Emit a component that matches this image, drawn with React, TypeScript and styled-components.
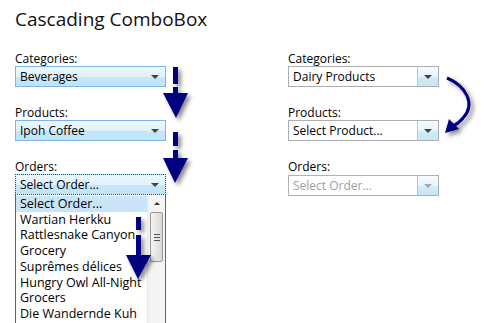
import React from 'react';
import styled, { createGlobalStyle, css } from 'styled-components';

const Global = createGlobalStyle`
  html, body { margin: 0; padding: 0; background: #fff; }
  body { font-family: "Segoe UI", "Open Sans", "Noto Sans", sans-serif; color: #000; }
`;

const Page = styled.div`
  position: relative;
  width: 486px;
  height: 323px;
  overflow: hidden;
  padding: 0 0 0 15px;
  box-sizing: border-box;
`;

const Title = styled.h1`
  margin: 0;
  padding-top: 6px;
  font-size: 19px;
  font-weight: 400;
  line-height: 26px;
  color: #111;
`;

const Columns = styled.div`
  display: flex;
  gap: 122px;
  margin-top: 19px;
`;

const Column = styled.div`
  display: flex;
  flex-direction: column;
  gap: 18px;
  width: 151px;
`;

const Field = styled.div`
  display: flex;
  flex-direction: column;
`;

const Label = styled.label`
  font-size: 12px;
  line-height: 15px;
  height: 15px;
`;

const Combo = styled.div<{ variant: 'hot' | 'plain'; disabled?: boolean; focused?: boolean }>`
  position: relative;
  height: 21px;
  box-sizing: border-box;
  display: flex;
  align-items: center;
  font-size: 12px;
  ${({ variant }) =>
    variant === 'hot'
      ? css`
          border: 1px solid #7eb4ea;
          background: linear-gradient(#ecf7fd 0%, #e0f2fc 50%, #c6e7f8 51%, #bfe4f7 100%);
        `
      : css`
          border: 1px solid #abadb3;
          background: #fff;
        `}
  ${({ disabled }) => disabled && css`border-color: #adb2b5; color: #a0a0a0; margin-top: 1px;`}
  ${({ focused }) => focused && css`border: 1px dotted #8a2a10;`}
`;

const ComboText = styled.span`
  flex: 1;
  padding-left: 4px;
  white-space: nowrap;
`;

const Caret = styled.span`
  width: 0;
  height: 0;
  margin-right: 6px;
  border-left: 4px solid transparent;
  border-right: 4px solid transparent;
  border-top: 4px solid #444;
`;

const DropButton = styled.span<{ disabled?: boolean }>`
  align-self: stretch;
  width: 20px;
  display: flex;
  align-items: center;
  justify-content: center;
  border-left: 1px solid #b8c6d2;
  background: linear-gradient(#f6fbfe 0%, #e6f3fb 50%, #d3ebf8 51%, #c6e5f6 100%);
  & > span {
    margin: 0;
    border-top-color: ${({ disabled }) => (disabled ? '#a5a5a5' : '#444')};
  }
`;

const List = styled.div`
  position: relative;
  height: 140px;
  border: 1px solid #646464;
  border-top: none;
  background: #fff;
  display: flex;
`;

const Items = styled.div`
  flex: 1;
  padding-top: 1px;
`;

const Item = styled.div<{ selected?: boolean }>`
  font-size: 12.5px;
  line-height: 15.7px;
  padding-left: 4px;
  white-space: pre-line;
  background: ${({ selected }) => (selected ? '#c9e4f6' : 'transparent')};
`;

const ScrollBar = styled.div`
  width: 17px;
  background: #f4f4f4;
  border-left: 1px solid #e6e6e6;
  display: flex;
  flex-direction: column;
  align-items: center;
`;

const ScrollUp = styled.div`
  height: 17px;
  display: flex;
  align-items: center;
  justify-content: center;
  &::before {
    content: '';
    border-left: 3px solid transparent;
    border-right: 3px solid transparent;
    border-bottom: 3px solid #333;
  }
`;

const Thumb = styled.div`
  width: 13px;
  height: 50px;
  box-sizing: border-box;
  border: 1px solid #979797;
  border-radius: 2px;
  background: linear-gradient(90deg, #f3f3f3, #e6e6e6 50%, #d8d8d8);
  display: flex;
  flex-direction: column;
  align-items: center;
  justify-content: center;
  gap: 2px;
  & > i {
    display: block;
    width: 6px;
    height: 1px;
    background: #555;
  }
`;

const Overlay = styled.svg`
  position: absolute;
  left: 0;
  top: 0;
  pointer-events: none;
`;

const orders = [
  'Select Order...',
  'Wartian Herkku',
  'Rattlesnake Canyon\nGrocery',
  'Suprêmes délices',
  'Hungry Owl All-Night\nGrocers',
  'Die Wandernde Kuh',
];

export default function App() {
  return (
    <Page>
      <Global />
      <Title>Cascading ComboBox</Title>
      <Columns>
        <Column>
          <Field>
            <Label>Categories:</Label>
            <Combo variant="hot">
              <ComboText>Beverages</ComboText>
              <Caret />
            </Combo>
          </Field>
          <Field>
            <Label>Products:</Label>
            <Combo variant="hot">
              <ComboText>Ipoh Coffee</ComboText>
              <Caret />
            </Combo>
          </Field>
          <Field>
            <Label>Orders:</Label>
            <Combo variant="hot" focused>
              <ComboText>Select Order...</ComboText>
              <Caret />
            </Combo>
            <List>
              <Items>
                {orders.map((o, i) => (
                  <Item key={o} selected={i === 0}>{o}</Item>
                ))}
              </Items>
              <ScrollBar>
                <ScrollUp />
                <Thumb><i /><i /><i /></Thumb>
              </ScrollBar>
            </List>
          </Field>
        </Column>
        <Column>
          <Field>
            <Label>Categories:</Label>
            <Combo variant="plain">
              <ComboText>Dairy Products</ComboText>
              <DropButton><Caret /></DropButton>
            </Combo>
          </Field>
          <Field>
            <Label>Products:</Label>
            <Combo variant="plain">
              <ComboText>Select Product...</ComboText>
              <DropButton><Caret /></DropButton>
            </Combo>
          </Field>
          <Field>
            <Label>Orders:</Label>
            <Combo variant="plain" disabled>
              <ComboText>Select Order...</ComboText>
              <DropButton disabled><Caret /></DropButton>
            </Combo>
          </Field>
        </Column>
      </Columns>

      {/* flow arrows drawn over the page */}
      <Overlay width="486" height="323" viewBox="0 0 486 323">
        <defs>
          <filter id="sh" x="-50%" y="-50%" width="200%" height="200%">
            <feDropShadow dx="3" dy="3" stdDeviation="2" floodColor="#000" floodOpacity="0.45" />
          </filter>
        </defs>
        <g fill="#000080" filter="url(#sh)">
          <rect x="173" y="67" width="5" height="17" />
          <rect x="173" y="87" width="5" height="7" />
          <polygon points="163,93 188,93 176,118" />
          <rect x="173" y="132" width="5" height="14" />
          <rect x="173" y="150" width="5" height="9" />
          <polygon points="163,158 188,158 175,183" />
          <rect x="136" y="217" width="5" height="13" />
          <rect x="136" y="235" width="5" height="15" />
          <rect x="136" y="250" width="5" height="6" />
          <polygon points="126,255 151,255 138,279" />
        </g>
        <g filter="url(#sh)">
          <path d="M447 78 C466 86 476 104 463 118 C460 122 457 124 453 126" fill="none" stroke="#000080" strokeWidth="3" />
          <polygon points="445,133 449,119 459,129" fill="#000080" />
        </g>
      </Overlay>
    </Page>
  );
}
